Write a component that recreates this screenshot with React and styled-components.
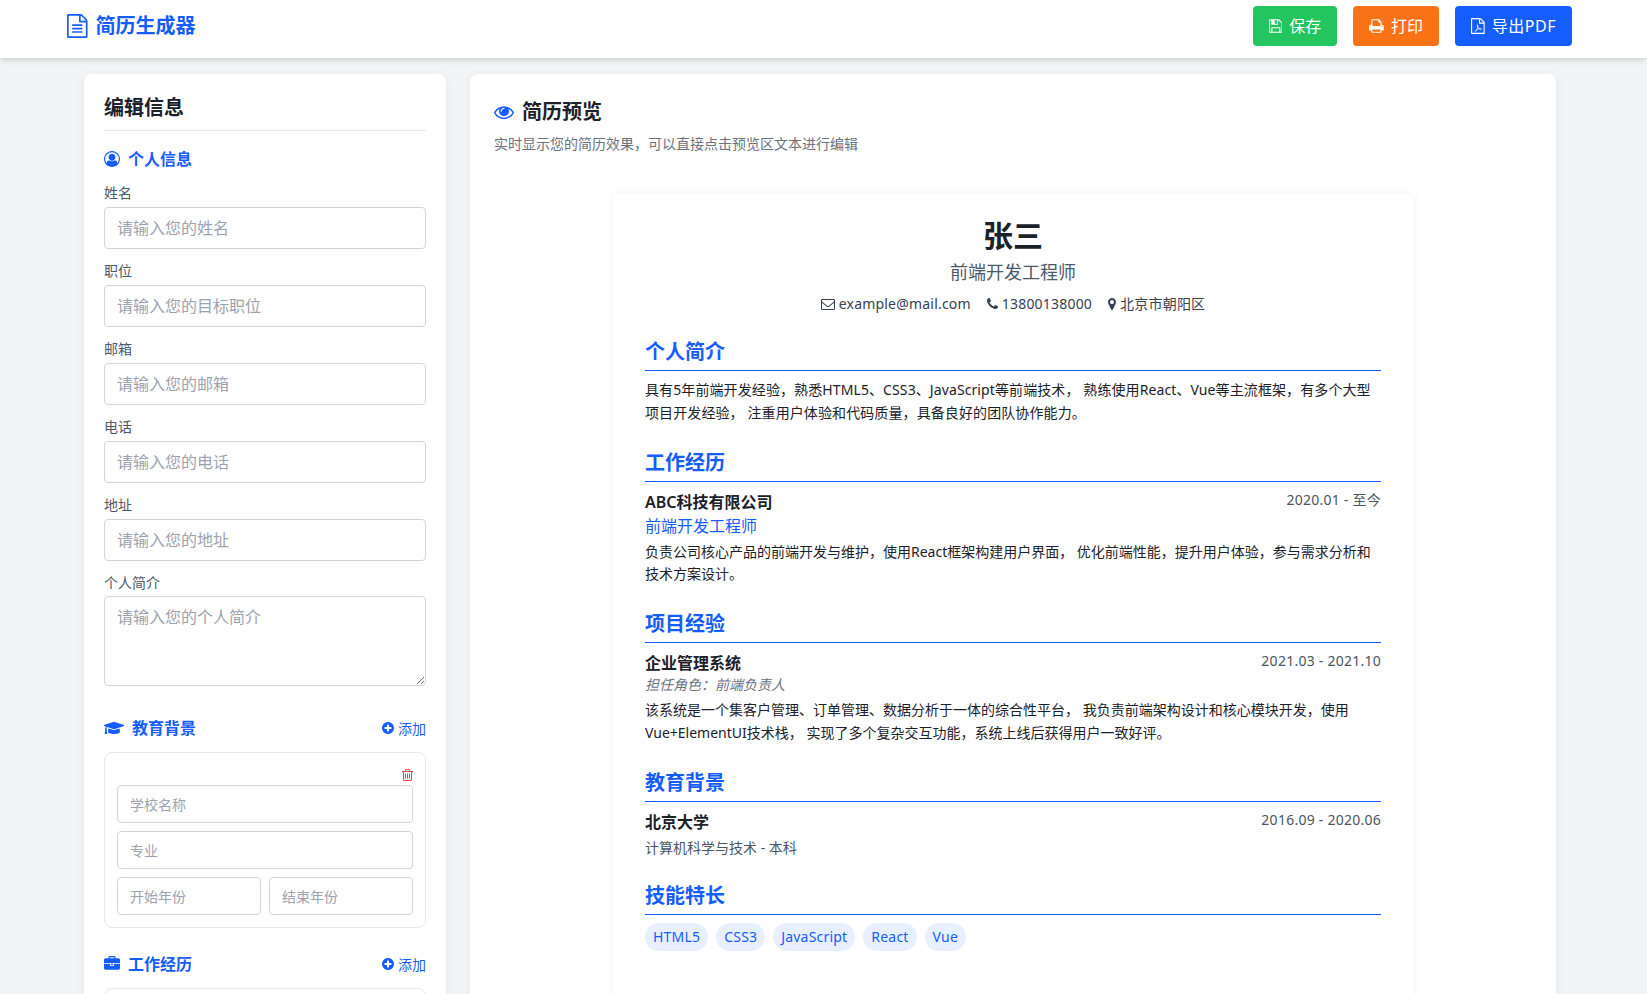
import styled, { createGlobalStyle } from 'styled-components';
import { FaGraduationCap } from 'react-icons/fa';

const BLUE = '#165dff';
const FIELDS = [
  ['姓名', '请输入您的姓名'],
  ['职位', '请输入您的目标职位'],
  ['邮箱', '请输入您的邮箱'],
  ['电话', '请输入您的电话'],
  ['地址', '请输入您的地址'],
];
const SKILLS = ['HTML5', 'CSS3', 'JavaScript', 'React', 'Vue'];

const FILE_OUTLINE =
  'M1596 380q28 28 48 76t20 88v1152q0 40-28 68t-68 28h-1344q-40 0-68-28t-28-68v-1600q0-40 28-68t68-28h896q40 0 88 20t76 48zm-444-244v376h376q-10-29-22-41l-313-313q-12-12-41-22zm384 1528v-1024h-416q-40 0-68-28t-28-68v-416h-768v1536h1280z';

// [left, width, path] in the 1792 grid the icons were drawn on
const GLYPHS = {
  file: [
    128,
    1536,
    FILE_OUTLINE +
      'm-1024-864q0-14 9-23t23-9h704q14 0 23 9t9 23v64q0 14-9 23t-23 9h-704q-14 0-23-9t-9-23v-64zm736 224q14 0 23 9t9 23v64q0 14-9 23t-23 9h-704q-14 0-23-9t-9-23v-64q0-14 9-23t23-9h704zm0 256q14 0 23 9t9 23v64q0 14-9 23t-23 9h-704q-14 0-23-9t-9-23v-64q0-14 9-23t23-9h704z',
  ],
  pdf: [128, 1536, FILE_OUTLINE],
  save: [
    128,
    1536,
    'M512 1536h768v-384h-768v384zm896 0h128v-896q0-14-10-38.5t-20-34.5l-281-281q-10-10-34-20t-39-10v416q0 40-28 68t-68 28h-576q-40 0-68-28t-28-68v-416h-128v1280h128v-416q0-40 28-68t68-28h832q40 0 68 28t28 68v416zm-384-928v-320q0-13-9.5-22.5t-22.5-9.5h-192q-13 0-22.5 9.5t-9.5 22.5v320q0 13 9.5 22.5t22.5 9.5h192q13 0 22.5-9.5t9.5-22.5zm640 32v928q0 40-28 68t-68 28h-1344q-40 0-68-28t-28-68v-1344q0-40 28-68t68-28h928q40 0 88 20t76 48l280 280q28 28 48 76t20 88z',
  ],
  print: [
    64,
    1664,
    'M448 1536h896v-256h-896v256zm0-640h896v-384h-160q-40 0-68-28t-28-68v-160h-640v640zm1152 64q0-26-19-45t-45-19-45 19-19 45 19 45 45 19 45-19 19-45zm128 0v416q0 13-9.5 22.5t-22.5 9.5h-224v160q0 40-28 68t-68 28h-960q-40 0-68-28t-28-68v-160h-224q-13 0-22.5-9.5t-9.5-22.5v-416q0-79 56.5-135.5t135.5-56.5h64v-544q0-40 28-68t68-28h672q40 0 88 20t76 48l152 152q28 28 48 76t20 88v256h64q79 0 135.5 56.5t56.5 135.5z',
  ],
  eye: [
    0,
    1792,
    'M1664 960q-152-236-381-353 61 104 61 225 0 185-131.5 316.5t-316.5 131.5-316.5-131.5-131.5-316.5q0-121 61-225-229 117-381 353 133 205 333.5 326.5t434.5 121.5 434.5-121.5 333.5-326.5zm-720-384q0-20-14-34t-34-14q-125 0-214.5 89.5t-89.5 214.5q0 20 14 34t34 14 34-14 14-34q0-86 61-147t147-61q20 0 34-14t14-34zm848 384q0 34-20 69-140 230-376.5 368.5t-499.5 138.5-499.5-139-376.5-368q-20-35-20-69t20-69q140-229 376.5-368t499.5-139 499.5 139 376.5 368q20 35 20 69z',
  ],
  user: [
    0,
    1792,
    'M896 0q182 0 348 71t286 191 191 286 71 348q0 181-70.5 347t-190.5 286-286 191.5-349 71.5-349-71-285.5-191.5-190.5-286-71-347.5 71-348 191-286 286-191 348-71zm619 1351q149-205 149-455 0-156-61-298t-164-245-245-164-298-61-298 61-245 164-164 245-61 298q0 250 149 455 66-327 306-327 131 128 313 128t313-128q240 0 306 327zm-235-647q0-159-112.5-271.5t-271.5-112.5-271.5 112.5-112.5 271.5 112.5 271.5 271.5 112.5 271.5-112.5 112.5-271.5z',
  ],
  briefcase: [
    0,
    1792,
    'M640 256h512v-128h-512v128zm1152 640v480q0 66-47 113t-113 47h-1472q-66 0-113-47t-47-113v-480h672v160q0 26 19 45t45 19h320q26 0 45-19t19-45v-160h672zm-768 0v128h-256v-128h256zm768-480v384h-1792v-384q0-66 47-113t113-47h352v-160q0-40 28-68t68-28h576q40 0 68 28t28 68v160h352q66 0 113 47t47 113z',
  ],
  plus: [
    128,
    1536,
    'M1344 960v-128q0-26-19-45t-45-19h-256v-256q0-26-19-45t-45-19h-128q-26 0-45 19t-19 45v256h-256q-26 0-45 19t-19 45v128q0 26 19 45t45 19h256v256q0 26 19 45t45 19h128q26 0 45-19t19-45v-256h256q26 0 45-19t19-45zm320-64q0 209-103 385.5t-279.5 279.5-385.5 103-385.5-103-279.5-279.5-103-385.5 103-385.5 279.5-279.5 385.5-103 385.5 103 279.5 279.5 103 385.5z',
  ],
  trash: [
    192,
    1408,
    'M704 736v576q0 14-9 23t-23 9h-64q-14 0-23-9t-9-23v-576q0-14 9-23t23-9h64q14 0 23 9t9 23zm256 0v576q0 14-9 23t-23 9h-64q-14 0-23-9t-9-23v-576q0-14 9-23t23-9h64q14 0 23 9t9 23zm256 0v576q0 14-9 23t-23 9h-64q-14 0-23-9t-9-23v-576q0-14 9-23t23-9h64q14 0 23 9t9 23zm128 724v-948h-896v948q0 22 7 40.5t14.5 27 10.5 8.5h832q3 0 10.5-8.5t14.5-27 7-40.5zm-672-1076h448l-48-117q-7-9-17-11h-317q-10 2-17 11zm928 32v64q0 14-9 23t-23 9h-96v948q0 83-47 143.5t-113 60.5h-832q-66 0-113-58.5t-47-141.5v-952h-96q-14 0-23-9t-9-23v-64q0-14 9-23t23-9h309l70-167q15-37 54-63t79-26h320q40 0 79 26t54 63l70 167h309q14 0 23 9t9 23z',
  ],
  envelope: [
    0,
    1792,
    'M1664 1504v-768q-32 36-69 66-268 206-426 338-51 43-83 67t-86.5 48.5-102.5 24.5h-2q-48 0-102.5-24.5t-86.5-48.5-83-67q-158-132-426-338-37-30-69-66v768q0 13 9.5 22.5t22.5 9.5h1472q13 0 22.5-9.5t9.5-22.5zm0-1051v-24.5l-.5-13-3-12.5-5.5-9-9-7.5-14-2.5h-1472q-13 0-22.5 9.5t-9.5 22.5q0 168 147 284 193 152 401 317 6 5 35 29.5t46 37.5 44.5 31.5 50.5 27.5 43 9h2q20 0 43-9t50.5-27.5 44.5-31.5 46-37.5 35-29.5q208-165 401-317 54-43 100.5-115.5t46.5-131.5zm128-37v1088q0 66-47 113t-113 47h-1472q-66 0-113-47t-47-113v-1088q0-66 47-113t113-47h1472q66 0 113 47t47 113z',
  ],
  phone: [
    192,
    1408,
    'M1600 1240q0 27-10 70.5t-21 68.5q-21 50-122 106-94 51-186 51-27 0-53-3.5t-57.5-12.5-47-14.5-55.5-20.5-49-18q-98-35-175-83-127-79-264-216t-216-264q-48-77-83-175-3-9-18-49t-20.5-55.5-14.5-47-12.5-57.5-3.5-53q0-92 51-186 56-101 106-122 25-11 68.5-21t70.5-10q14 0 21 3 18 6 53 76 11 19 30 54t35 63.5 31 53.5q3 4 17.5 25t21.5 35.5 7 28.5q0 20-28.5 50t-62 55-62 53-28.5 46q0 9 5 22.5t8.5 20.5 14 24 11.5 19q76 137 174 235t235 174q2 1 19 11.5t24 14 20.5 8.5 22.5 5q18 0 46-28.5t53-62 55-62 50-28.5q14 0 28.5 7t35.5 21.5 25 17.5q25 15 53.5 31t63.5 35 54 30q70 35 76 53 3 7 3 21z',
  ],
  marker: [
    384,
    1024,
    'M1152 640q0-106-75-181t-181-75-181 75-75 181 75 181 181 75 181-75 75-181zm256 0q0 109-33 179l-364 774q-16 33-47.5 52t-67.5 19-67.5-19-46.5-52l-365-774q-33-70-33-179 0-212 150-362t362-150 362 150 150 362z',
  ],
};

function Icon({ name, size, children }) {
  const [left, width, path] = GLYPHS[name];
  return (
    <svg
      viewBox={`${left} 0 ${width} 1792`}
      width={(size * width) / 1792}
      height={size}
      fill="currentColor"
      style={{ flexShrink: 0 }}
    >
      <path d={path} />
      {children}
    </svg>
  );
}

const GlobalStyle = createGlobalStyle`
  * { box-sizing: border-box; }
  html, body { margin: 0; height: 100%; overflow: hidden; }
  body {
    background: #f3f4f6;
    color: #1d2129;
    font-family: "Noto Sans", "Noto Sans CJK SC", sans-serif;
    font-size: 16px;
    line-height: 1.5;
  }
`;

export default function App() {
  return (
    <Page>
      <GlobalStyle />
      <Header>
        <Logo>
          <Icon name="file" size={24} />
          简历生成器
        </Logo>
        <Actions>
          <ActionBtn $bg="#22c55e">
            <Icon name="save" size={16} />
            保存
          </ActionBtn>
          <ActionBtn $bg="#f97316">
            <Icon name="print" size={16} />
            打印
          </ActionBtn>
          <ActionBtn $bg={BLUE}>
            <Icon name="pdf" size={16}>
              <PdfMark d="M620 1510C800 1320 960 1000 880 800C860 720 800 760 840 900C900 1100 1080 1240 1230 1280C1320 1300 1300 1180 1120 1200C960 1200 760 1280 620 1510Z" />
            </Icon>
            <PdfLabel>导出PDF</PdfLabel>
          </ActionBtn>
        </Actions>
      </Header>
      <Main>
        <EditPanel>
          <PanelTitle>编辑信息</PanelTitle>
          <SectionHead>
            <Icon name="user" size={16} />
            个人信息
          </SectionHead>
          {FIELDS.map(([label, hint]) => (
            <Field key={label}>
              <Label>{label}</Label>
              <Input placeholder={hint} />
            </Field>
          ))}
          <Field>
            <Label>个人简介</Label>
            <TextArea placeholder="请输入您的个人简介" rows={3} />
          </Field>

          <RowHead $top={30}>
            <SectionHead as="div">
              <FaGraduationCap size={20} />
              教育背景
            </SectionHead>
            <AddBtn>
              <Icon name="plus" size={14} />
              添加
            </AddBtn>
          </RowHead>
          <ItemCard>
            <DeleteBtn>
              <Icon name="trash" size={14} />
            </DeleteBtn>
            <SmallInput placeholder="学校名称" />
            <SmallInput placeholder="专业" />
            <TwoCols>
              <SmallInput placeholder="开始年份" />
              <SmallInput placeholder="结束年份" />
            </TwoCols>
          </ItemCard>

          <RowHead>
            <SectionHead as="div">
              <Icon name="briefcase" size={16} />
              工作经历
            </SectionHead>
            <AddBtn>
              <Icon name="plus" size={14} />
              添加
            </AddBtn>
          </RowHead>
          <ItemCard />
        </EditPanel>

        <PreviewPanel>
          <PreviewTitle>
            <Icon name="eye" size={20} />
            简历预览
          </PreviewTitle>
          <PreviewHint>实时显示您的简历效果，可以直接点击预览区文本进行编辑</PreviewHint>

          <Sheet>
            <Name>张三</Name>
            <JobTitle>前端开发工程师</JobTitle>
            <Contacts>
              <Contact>
                <Icon name="envelope" size={14} />
                example@mail.com
              </Contact>
              <Contact>
                <Icon name="phone" size={14} />
                13800138000
              </Contact>
              <Contact>
                <Icon name="marker" size={14} />
                北京市朝阳区
              </Contact>
            </Contacts>

            <Block>
              <BlockTitle>个人简介</BlockTitle>
              <Body $spread>
                具有5年前端开发经验，熟悉HTML5、CSS3、JavaScript等前端技术， 熟练使用React、Vue等主流框架，有多个大型项目开发经验， 注重用户体验和代码质量，具备良好的团队协作能力。
              </Body>
            </Block>

            <Block>
              <BlockTitle>工作经历</BlockTitle>
              <EntryHead>
                <EntryName>ABC科技有限公司</EntryName>
                <EntryDate>2020.01 - 至今</EntryDate>
              </EntryHead>
              <EntryRole>前端开发工程师</EntryRole>
              <Body>
                负责公司核心产品的前端开发与维护，使用React框架构建用户界面， 优化前端性能，提升用户体验，参与需求分析和技术方案设计。
              </Body>
            </Block>

            <Block>
              <BlockTitle>项目经验</BlockTitle>
              <EntryHead>
                <EntryName>企业管理系统</EntryName>
                <EntryDate>2021.03 - 2021.10</EntryDate>
              </EntryHead>
              <EntryNote>担任角色：前端负责人</EntryNote>
              <Body>
                该系统是一个集客户管理、订单管理、数据分析于一体的综合性平台， 我负责前端架构设计和核心模块开发，使用Vue+ElementUI技术栈， 实现了多个复杂交互功能，系统上线后获得用户一致好评。
              </Body>
            </Block>

            <Block>
              <BlockTitle>教育背景</BlockTitle>
              <EntryHead>
                <EntryName>北京大学</EntryName>
                <EntryDate>2016.09 - 2020.06</EntryDate>
              </EntryHead>
              <EntrySub>计算机科学与技术 - 本科</EntrySub>
            </Block>

            <Block>
              <BlockTitle>技能特长</BlockTitle>
              <Tags>
                {SKILLS.map((skill) => (
                  <Tag key={skill}>{skill}</Tag>
                ))}
              </Tags>
            </Block>
          </Sheet>
        </PreviewPanel>
      </Main>
    </Page>
  );
}

const Page = styled.div`
  height: 994px;
  overflow: hidden;
`;

const Header = styled.header`
  height: 58px;
  padding: 6px 75px 12px 67px;
  background: #fff;
  box-shadow: 0 4px 6px -1px rgba(0, 0, 0, 0.1), 0 2px 4px -1px rgba(0, 0, 0, 0.06);
  position: relative;
  z-index: 2;
  display: flex;
  align-items: center;
  justify-content: space-between;
`;

const Logo = styled.div`
  display: flex;
  align-items: center;
  gap: 8px;
  color: ${BLUE};
  font-size: 20px;
  font-weight: 700;
`;

const Actions = styled.div`
  display: flex;
  gap: 16px;
`;

const ActionBtn = styled.button`
  height: 40px;
  padding: 0 16px;
  border: 0;
  border-radius: 4px;
  background: ${(p) => p.$bg};
  color: #fff;
  font: inherit;
  display: flex;
  align-items: center;
  gap: 7px;
`;

const PdfLabel = styled.span`
  letter-spacing: 0.5px;
`;

const PdfMark = styled.path`
  fill: none;
  stroke: currentColor;
  stroke-width: 90;
`;

const Main = styled.main`
  width: 1640px;
  padding: 16px 84px 0;
  display: flex;
  align-items: flex-start;
  gap: 24px;
`;

const EditPanel = styled.section`
  width: 362px;
  flex-shrink: 0;
  padding: 20px;
  border-radius: 8px;
  background: #fff;
  box-shadow: 0 2px 10px rgba(0, 0, 0, 0.06);
`;

const PanelTitle = styled.h2`
  margin: 0 0 16px;
  padding-bottom: 8px;
  border-bottom: 1px solid #e5e7eb;
  font-size: 20px;
  font-weight: 700;
  line-height: 28px;
`;

const SectionHead = styled.h3`
  margin: 0 0 12px;
  color: ${BLUE};
  font-size: 16px;
  font-weight: 600;
  line-height: 24px;
  display: flex;
  align-items: center;
  gap: 8px;
`;

const RowHead = styled.div`
  margin-top: ${(p) => p.$top ?? 24}px;
  margin-bottom: 12px;
  display: flex;
  align-items: center;
  justify-content: space-between;

  & > div {
    margin: 0;
  }
`;

const AddBtn = styled.button`
  padding: 0;
  border: 0;
  background: none;
  color: ${BLUE};
  font: inherit;
  font-size: 14px;
  display: flex;
  align-items: center;
  gap: 4px;
`;

const Field = styled.div`
  margin-bottom: 12px;
`;

const Label = styled.label`
  display: block;
  margin-bottom: 4px;
  color: #4e5969;
  font-size: 14px;
  line-height: 19.9px;
`;

const Input = styled.input`
  display: block;
  width: 100%;
  height: 42px;
  padding: 8px 12px;
  border: 1px solid #d1d5db;
  border-radius: 4px;
  outline: 0;
  font: inherit;

  &::placeholder {
    color: #9ca3af;
  }
`;

const TextArea = styled.textarea`
  display: block;
  width: 100%;
  height: 90px;
  padding: 8px 12px;
  border: 1px solid #d1d5db;
  border-radius: 4px;
  outline: 0;
  font: inherit;

  &::placeholder {
    color: #9ca3af;
  }
`;

const ItemCard = styled.div`
  position: relative;
  padding: 32px 12px 12px;
  border: 1px solid #e5e7eb;
  border-radius: 8px;
  display: flex;
  flex-direction: column;
  gap: 8px;
`;

const DeleteBtn = styled.button`
  position: absolute;
  top: 15px;
  right: 12px;
  padding: 0;
  border: 0;
  background: none;
  color: #ef4444;
  display: flex;
`;

const SmallInput = styled.input`
  display: block;
  width: 100%;
  min-width: 0;
  height: 38px;
  padding: 8px 12px;
  border: 1px solid #d1d5db;
  border-radius: 4px;
  outline: 0;
  font: inherit;
  font-size: 14px;

  &::placeholder {
    color: #9ca3af;
  }
`;

const TwoCols = styled.div`
  display: grid;
  grid-template-columns: 1fr 1fr;
  gap: 8px;
`;

const PreviewPanel = styled.section`
  flex: 1;
  min-width: 0;
  padding: 24px;
  border-radius: 8px;
  background: #fff;
  box-shadow: 0 2px 10px rgba(0, 0, 0, 0.06);
`;

const PreviewTitle = styled.h2`
  margin: 0;
  font-size: 20px;
  font-weight: 700;
  line-height: 28px;
  display: flex;
  align-items: center;
  gap: 8px;

  svg {
    color: ${BLUE};
  }
`;

const PreviewHint = styled.p`
  margin: 8px 0 0;
  color: #6b7280;
  font-size: 14px;
  line-height: 20px;
`;

const Sheet = styled.article`
  width: 800px;
  min-height: 1123px;
  margin: 40px auto 0;
  padding: 24px 32px;
  background: #fff;
  box-shadow: 0 0 10px rgba(0, 0, 0, 0.05);
`;

const Name = styled.h1`
  margin: 0;
  text-align: center;
  font-size: 30px;
  font-weight: 700;
  line-height: 36px;
`;

const JobTitle = styled.div`
  margin-top: 4px;
  text-align: center;
  color: #4e5969;
  font-size: 18px;
  line-height: 28px;
`;

const Contacts = styled.div`
  margin-top: 8px;
  display: flex;
  justify-content: center;
  gap: 16px;
  color: #374151;
  font-size: 14px;
  letter-spacing: 0.2px;
  line-height: 20px;
`;

const Contact = styled.span`
  display: flex;
  align-items: center;
  gap: 4px;
`;

const Block = styled.div`
  margin-top: 24px;
`;

const BlockTitle = styled.h2`
  margin: 0 0 8px;
  padding-bottom: 4px;
  border-bottom: 1px solid ${BLUE};
  color: ${BLUE};
  font-size: 20px;
  font-weight: 700;
  line-height: 28px;
`;

const Body = styled.p`
  margin: 0;
  color: #1d2129;
  font-size: 14px;
  line-height: 1.625;
  letter-spacing: ${(p) => (p.$spread ? '0.1px' : '0')};
`;

const EntryHead = styled.div`
  display: flex;
  justify-content: space-between;
  align-items: flex-start;
`;

const EntryName = styled.div`
  font-size: 16px;
  font-weight: 600;
  line-height: 24px;
`;

const EntryDate = styled.div`
  color: #4b5563;
  font-size: 14px;
  letter-spacing: 0.25px;
  line-height: 20px;
`;

const EntryRole = styled.div`
  margin: 0 0 3px;
  color: ${BLUE};
  font-size: 16px;
  line-height: 24px;
`;

const EntryNote = styled.div`
  margin-bottom: 4px;
  color: #6b7280;
  font-size: 14px;
  font-style: italic;
  line-height: 20px;
`;

const EntrySub = styled.div`
  margin-top: 4px;
  color: #4b5563;
  font-size: 14px;
  line-height: 20px;
`;

const Tags = styled.div`
  display: flex;
  gap: 8px;
`;

const Tag = styled.span`
  padding: 2px 8px;
  border-radius: 999px;
  background: #e8f0ff;
  color: ${BLUE};
  font-size: 14px;
  letter-spacing: 0.2px;
  line-height: 24px;
`;
